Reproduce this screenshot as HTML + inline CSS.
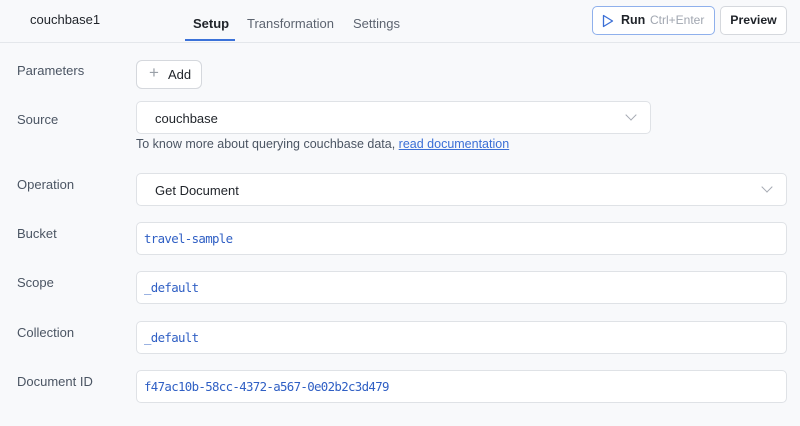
<!DOCTYPE html>
<html><head><style>
*{box-sizing:border-box;margin:0;padding:0}
body{width:800px;height:426px;background:#f8f9fb;font-family:"Liberation Sans",sans-serif;position:relative;overflow:hidden;color:#1f2329}
.hdr{position:absolute;left:0;top:0;width:800px;height:43px;border-bottom:1px solid #e4e7eb;background:#f8f9fb}
.abs{position:absolute}
.lbl{position:absolute;left:17px;font-size:13px;color:#4b5563}
.box{position:absolute;left:136px;background:#fff;border:1px solid #dfe2e6;border-radius:5px}
.code{font-family:"DejaVu Sans Mono",monospace;font-size:12.4px;letter-spacing:-0.66px;color:#2f5fc4;position:absolute;left:7px;top:8px}
.chev{position:absolute;width:8px;height:8px;border-right:1.5px solid #a5aab3;border-bottom:1.5px solid #a5aab3;transform:rotate(45deg)}
</style></head><body>
<div class="hdr">
<div class="abs" style="left:30px;top:12px;font-size:13px;color:#1f2329">couchbase1</div>
<div class="abs" style="left:193px;top:16px;font-size:13px;font-weight:bold;color:#1f2329">Setup</div>
<div class="abs" style="left:185px;top:39px;width:50px;height:2px;background:#3b72d9"></div>
<div class="abs" style="left:247px;top:16px;font-size:13px;color:#5d6470">Transformation</div>
<div class="abs" style="left:353px;top:16px;font-size:13px;color:#5d6470">Settings</div>
<div class="abs" style="left:592px;top:6px;width:123px;height:29px;border:1px solid #8fb0ec;border-radius:5px;background:#fff">
<svg class="abs" style="left:9px;top:7px" width="12" height="14" viewBox="0 0 12 14"><path d="M1.5 1.5 L10.5 7 L1.5 12.5 Z" fill="none" stroke="#3b6fd6" stroke-width="1.3" stroke-linejoin="round"/></svg>
<span class="abs" style="left:28px;top:6px;font-size:12.5px;font-weight:bold;color:#1f2329">Run</span>
<span class="abs" style="left:57px;top:6px;font-size:12px;color:#a0a6b0">Ctrl+Enter</span></div>
<div class="abs" style="left:720px;top:6px;width:67px;height:29px;border:1px solid #d5d8dd;border-radius:5px;background:#fff;font-size:12.3px;font-weight:bold;text-align:center;line-height:27px">Preview</div>
</div>
<div class="lbl" style="top:63px">Parameters</div>
<div class="box" style="top:60px;width:66px;height:29px;border-color:#d5d8dd;border-radius:6px">
<span class="abs" style="left:12px;top:2px;font-size:17px;color:#9aa0a8">+</span>
<span class="abs" style="left:31px;top:6px;font-size:13px;color:#1f2329">Add</span></div>
<div class="lbl" style="top:112px">Source</div>
<div class="box" style="top:101px;width:515px;height:33px"><span class="abs" style="left:18px;top:9px;font-size:13px">couchbase</span><div class="chev" style="left:490px;top:9px"></div></div>
<div class="abs" style="left:136px;top:137px;font-size:12.5px;color:#4b5563">To know more about querying couchbase data, <span style="color:#3b6fd6;text-decoration:underline">read documentation</span></div>
<div class="lbl" style="top:177px">Operation</div>
<div class="box" style="top:173px;width:651px;height:33px"><span class="abs" style="left:18px;top:9px;font-size:13px">Get Document</span><div class="chev" style="left:626px;top:9px"></div></div>
<div class="lbl" style="top:226px">Bucket</div>
<div class="box" style="top:222px;width:651px;height:33px"><span class="code">travel-sample</span></div>
<div class="lbl" style="top:275px">Scope</div>
<div class="box" style="top:271px;width:651px;height:33px"><span class="code">_default</span></div>
<div class="lbl" style="top:325px">Collection</div>
<div class="box" style="top:321px;width:651px;height:33px"><span class="code">_default</span></div>
<div class="lbl" style="top:374px">Document ID</div>
<div class="box" style="top:370px;width:651px;height:33px"><span class="code">f47ac10b-58cc-4372-a567-0e02b2c3d479</span></div>
</body></html>
